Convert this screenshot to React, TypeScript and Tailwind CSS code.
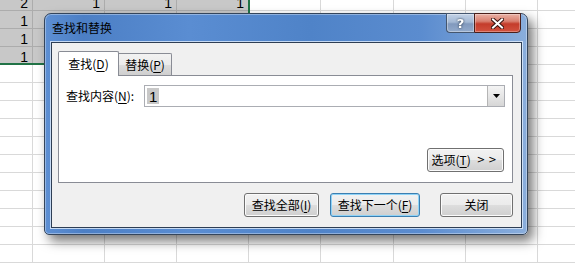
import React from 'react';

const colW = ['w-[33px]', 'w-[72px]', 'w-[72px]', 'w-[72px]', 'w-[72px]', 'w-[73px]', 'w-[72px]', 'w-[72px]', 'w-[72px]'];

const values: Record<string, string> = {
  '0-0': '2',
  '0-1': '1',
  '0-2': '1',
  '0-3': '1',
  '1-0': '1',
  '2-0': '1',
  '3-0': '1',
};

function Sheet() {
  const rows = Array.from({ length: 16 }, (_, i) => i);
  return (
    <div className="flex flex-col -mt-[7px]">
      {rows.map((r) => (
        <div key={r} className="flex">
          {colW.map((w, c) => {
            const sel = r < 4 && c < 4;
            return (
              <div
                key={c}
                className={`${w} h-[18px] shrink-0 border-r border-b flex items-end justify-end pr-[4px] text-[14px] leading-none text-black ${
                  sel ? 'bg-[#c8c8c8] border-[#acacac]' : 'bg-white border-[#d9d9d9]'
                }`}
              >
                {values[`${r}-${c}`] ?? ''}
              </div>
            );
          })}
        </div>
      ))}
    </div>
  );
}

function Btn({ children, w, focus }: { children: React.ReactNode; w: string; focus?: boolean }) {
  return (
    <div
      className={`${w} h-[24px] flex items-center justify-center rounded-[3px] border text-[12px] leading-none text-black bg-[linear-gradient(180deg,#f2f2f2_0%,#ebebeb_48%,#dddddd_52%,#cfcfcf_100%)] ${
        focus
          ? 'border-[#3c7fb1] shadow-[inset_0_0_0_1px_#8fd3f7]'
          : 'border-[#707070] shadow-[inset_0_0_0_1px_#fbfbfb]'
      }`}
    >
      {children}
    </div>
  );
}

function Dialog() {
  return (
    <div className="absolute left-[44px] top-[13px] w-[484px] h-[222px] flex flex-col rounded-t-[7px] rounded-b-[5px] border border-[#34455b] bg-[linear-gradient(90deg,#5d8fd3_0%,#4c7fc5_8%,#5a8dd2_30%,#4f83c8_55%,#5b8ccf_78%,#8aaedc_100%)] shadow-[5px_6px_12px_rgba(0,0,0,0.55),inset_0_0_0_1px_rgba(255,255,255,0.35)] font-['Noto_Sans_CJK_SC','Microsoft_YaHei',sans-serif]">
      {/* title bar */}
      <div className="h-[28px] flex items-start shrink-0">
        <div className="pl-[7px] h-full flex items-center text-[12px] leading-none text-black">查找和替换</div>
        <div className="ml-auto mr-[6px] -mt-px flex">
          <div className="w-[28px] h-[20px] flex items-center justify-center rounded-bl-[4px] border border-[#44566f] border-r-0 bg-[linear-gradient(180deg,#c3d2e6_0%,#a3b8d4_45%,#8199bd_55%,#93abcc_100%)] shadow-[inset_0_0_0_1px_rgba(255,255,255,0.35)]">
            <span className="text-[13px] font-bold leading-none text-white font-['DejaVu_Sans',sans-serif] drop-shadow-[0_0_1px_#1c2a3c]">?</span>
          </div>
          <div className="w-[47px] h-[20px] flex items-center justify-center rounded-br-[4px] border border-[#4a1f1a] bg-[linear-gradient(180deg,#eab1a5_0%,#d98070_40%,#c43c2b_55%,#d2523f_100%)] shadow-[inset_0_0_0_1px_rgba(255,255,255,0.3)]">
            <svg width="13" height="11" viewBox="0 0 13 11">
              <path d="M2 1.5 L11 9.5 M11 1.5 L2 9.5" stroke="#3a1410" strokeWidth="4" strokeLinecap="square" />
              <path d="M2 1.5 L11 9.5 M11 1.5 L2 9.5" stroke="#ffffff" strokeWidth="2" strokeLinecap="square" />
            </svg>
          </div>
        </div>
      </div>

      {/* client */}
      <div className="h-[186px] ml-[6px] mr-[5px] border border-[#2e3e54] bg-[#f0f0f0] shadow-[0_0_0_1px_rgba(225,238,252,0.8)] flex flex-col pt-[8px] pl-[6px] pr-[8px]">
        {/* tabs */}
        <div className="h-[24px] flex items-end">
          <div className="relative z-10 w-[61px] h-[25px] -mb-px border border-b-0 border-[#898c95] bg-white flex items-center justify-center text-[12px] leading-none text-black rounded-t-[2px]">
            查找(<u className="underline-offset-2">D</u>)
          </div>
          <div className="w-[53px] h-[22px] border border-l-0 border-b-0 border-[#898c95] bg-[linear-gradient(180deg,#f2f2f2_0%,#ebebeb_50%,#dddddd_51%,#cfcfcf_100%)] flex items-center justify-center text-[12px] leading-none text-black rounded-tr-[2px]">
            替换(<u className="underline-offset-2">P</u>)
          </div>
        </div>
        {/* panel */}
        <div className="h-[108px] border border-[#898c95] bg-white flex flex-col justify-between">
          <div className="mt-[9px] flex items-center pl-[7px] pr-[7px]">
            <div className="w-[78px] text-[12px] leading-none text-black">
              查找内容(<u className="underline-offset-2">N</u>):
            </div>
            <div className="flex-1 h-[22px] border border-[#abadb3] bg-white flex items-center">
              <span className="ml-[2px] h-[16px] px-[2px] bg-[#c8c8c8] flex items-center text-[15px] leading-none text-black font-['Liberation_Sans',sans-serif]">1</span>
              <div className="ml-auto w-[17px] h-full border-l border-[#b5b5b5] bg-[linear-gradient(180deg,#f4f4f4_0%,#e6e6e6_50%,#d6d6d6_100%)] flex items-center justify-center">
                <svg width="7" height="4" viewBox="0 0 7 4">
                  <path d="M0 0 H7 L3.5 4 Z" fill="#000" />
                </svg>
              </div>
            </div>
          </div>
          <div className="mb-[10px] pr-[8px] flex justify-end">
            <Btn w="w-[77px]">
              <span>
                选项(<u className="underline-offset-2">T</u>)
              </span>
              <span className="ml-[6px] text-[10px] tracking-[3px] font-['DejaVu_Sans',sans-serif]">&gt;&gt;</span>
            </Btn>
          </div>
        </div>
        {/* buttons */}
        <div className="mt-[10px] flex justify-end">
          <Btn w="w-[75px]">
            查找全部(<u className="underline-offset-2">I</u>)
          </Btn>
          <div className="w-[11px]" />
          <Btn w="w-[90px]" focus>
            查找下一个(<u className="underline-offset-2">F</u>)
          </Btn>
          <div className="w-[20px]" />
          <Btn w="w-[73px]">关闭</Btn>
        </div>
      </div>
    </div>
  );
}

export default function App() {
  return (
    <div className="relative w-[575px] h-[263px] overflow-hidden bg-white font-['Liberation_Sans',sans-serif]">
      <Sheet />
      <div className="absolute left-0 top-[-7px] w-[250px] h-[72px] border-r-2 border-b-2 border-[#217346] pointer-events-none" />
      <Dialog />
    </div>
  );
}
